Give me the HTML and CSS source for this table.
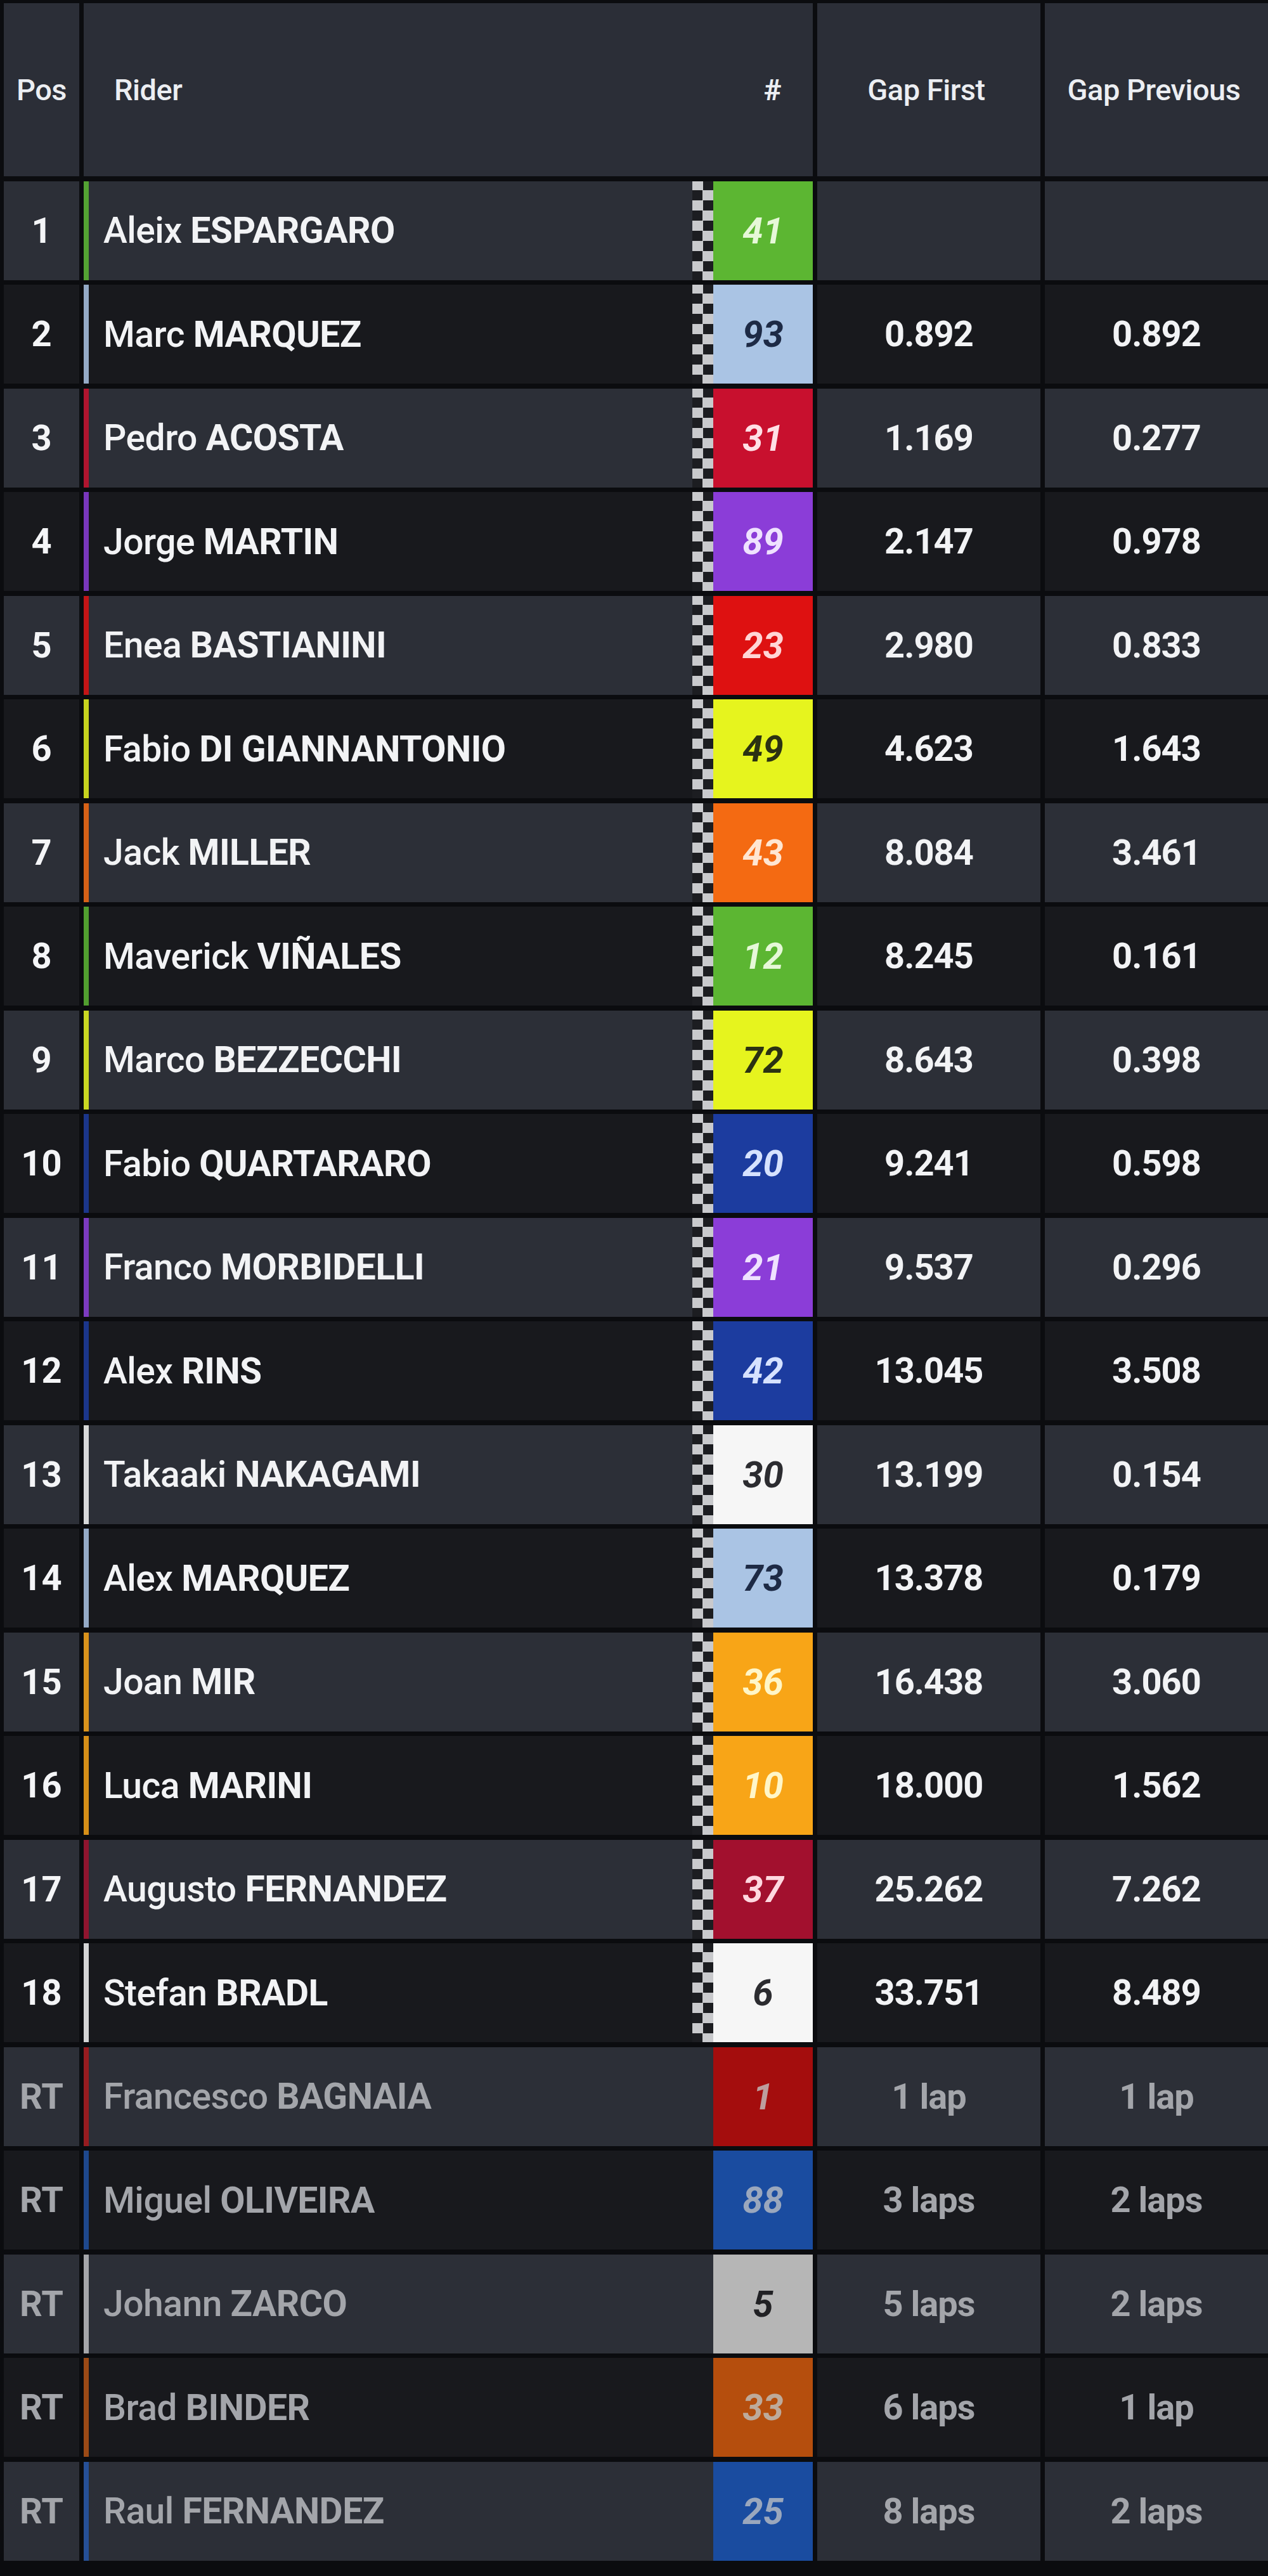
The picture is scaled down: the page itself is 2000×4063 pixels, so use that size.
FILE: index.html
```html
<!DOCTYPE html>
<html lang="en">
<head>
<meta charset="utf-8">
<title>Race Classification</title>
<link rel="stylesheet" href="styles.css">
</head>
<body>
<div class="board">
  <div class="head">
    <div class="cell h-pos">Pos</div>
    <div class="cell h-rider"><span class="h-label">Rider</span><span class="h-num">#</span></div>
    <div class="cell h-gap">Gap First</div>
    <div class="cell h-gap">Gap Previous</div>
  </div>

  <div class="row aprilia"><div class="cell pos">1</div><div class="cell rider"><span class="bar"></span><span class="name">Aleix <b>ESPARGARO</b></span><span class="flag"></span><span class="num">41</span></div><div class="cell gap"></div><div class="cell gap"></div></div>
  <div class="row gresini"><div class="cell pos">2</div><div class="cell rider"><span class="bar"></span><span class="name">Marc <b>MARQUEZ</b></span><span class="flag"></span><span class="num">93</span></div><div class="cell gap">0.892</div><div class="cell gap">0.892</div></div>
  <div class="row tech3"><div class="cell pos">3</div><div class="cell rider"><span class="bar"></span><span class="name">Pedro <b>ACOSTA</b></span><span class="flag"></span><span class="num">31</span></div><div class="cell gap">1.169</div><div class="cell gap">0.277</div></div>
  <div class="row pramac"><div class="cell pos">4</div><div class="cell rider"><span class="bar"></span><span class="name">Jorge <b>MARTIN</b></span><span class="flag"></span><span class="num">89</span></div><div class="cell gap">2.147</div><div class="cell gap">0.978</div></div>
  <div class="row ducati"><div class="cell pos">5</div><div class="cell rider"><span class="bar"></span><span class="name">Enea <b>BASTIANINI</b></span><span class="flag"></span><span class="num">23</span></div><div class="cell gap">2.980</div><div class="cell gap">0.833</div></div>
  <div class="row vr46"><div class="cell pos">6</div><div class="cell rider"><span class="bar"></span><span class="name">Fabio <b>DI GIANNANTONIO</b></span><span class="flag"></span><span class="num">49</span></div><div class="cell gap">4.623</div><div class="cell gap">1.643</div></div>
  <div class="row ktm"><div class="cell pos">7</div><div class="cell rider"><span class="bar"></span><span class="name">Jack <b>MILLER</b></span><span class="flag"></span><span class="num">43</span></div><div class="cell gap">8.084</div><div class="cell gap">3.461</div></div>
  <div class="row aprilia"><div class="cell pos">8</div><div class="cell rider"><span class="bar"></span><span class="name">Maverick <b>VIÑALES</b></span><span class="flag"></span><span class="num">12</span></div><div class="cell gap">8.245</div><div class="cell gap">0.161</div></div>
  <div class="row vr46"><div class="cell pos">9</div><div class="cell rider"><span class="bar"></span><span class="name">Marco <b>BEZZECCHI</b></span><span class="flag"></span><span class="num">72</span></div><div class="cell gap">8.643</div><div class="cell gap">0.398</div></div>
  <div class="row yamaha"><div class="cell pos">10</div><div class="cell rider"><span class="bar"></span><span class="name">Fabio <b>QUARTARARO</b></span><span class="flag"></span><span class="num">20</span></div><div class="cell gap">9.241</div><div class="cell gap">0.598</div></div>
  <div class="row pramac"><div class="cell pos">11</div><div class="cell rider"><span class="bar"></span><span class="name">Franco <b>MORBIDELLI</b></span><span class="flag"></span><span class="num">21</span></div><div class="cell gap">9.537</div><div class="cell gap">0.296</div></div>
  <div class="row yamaha"><div class="cell pos">12</div><div class="cell rider"><span class="bar"></span><span class="name">Alex <b>RINS</b></span><span class="flag"></span><span class="num">42</span></div><div class="cell gap">13.045</div><div class="cell gap">3.508</div></div>
  <div class="row lcr"><div class="cell pos">13</div><div class="cell rider"><span class="bar"></span><span class="name">Takaaki <b>NAKAGAMI</b></span><span class="flag"></span><span class="num">30</span></div><div class="cell gap">13.199</div><div class="cell gap">0.154</div></div>
  <div class="row gresini"><div class="cell pos">14</div><div class="cell rider"><span class="bar"></span><span class="name">Alex <b>MARQUEZ</b></span><span class="flag"></span><span class="num">73</span></div><div class="cell gap">13.378</div><div class="cell gap">0.179</div></div>
  <div class="row repsol"><div class="cell pos">15</div><div class="cell rider"><span class="bar"></span><span class="name">Joan <b>MIR</b></span><span class="flag"></span><span class="num">36</span></div><div class="cell gap">16.438</div><div class="cell gap">3.060</div></div>
  <div class="row repsol"><div class="cell pos">16</div><div class="cell rider"><span class="bar"></span><span class="name">Luca <b>MARINI</b></span><span class="flag"></span><span class="num">10</span></div><div class="cell gap">18.000</div><div class="cell gap">1.562</div></div>
  <div class="row tech3-dark"><div class="cell pos">17</div><div class="cell rider"><span class="bar"></span><span class="name">Augusto <b>FERNANDEZ</b></span><span class="flag"></span><span class="num">37</span></div><div class="cell gap">25.262</div><div class="cell gap">7.262</div></div>
  <div class="row lcr"><div class="cell pos">18</div><div class="cell rider"><span class="bar"></span><span class="name">Stefan <b>BRADL</b></span><span class="flag"></span><span class="num">6</span></div><div class="cell gap">33.751</div><div class="cell gap">8.489</div></div>

  <div class="row ducati retired"><div class="cell pos">RT</div><div class="cell rider"><span class="bar"></span><span class="name">Francesco <b>BAGNAIA</b></span><span class="num">1</span></div><div class="cell gap">1 lap</div><div class="cell gap">1 lap</div></div>
  <div class="row trackhouse retired"><div class="cell pos">RT</div><div class="cell rider"><span class="bar"></span><span class="name">Miguel <b>OLIVEIRA</b></span><span class="num">88</span></div><div class="cell gap">3 laps</div><div class="cell gap">2 laps</div></div>
  <div class="row lcr retired"><div class="cell pos">RT</div><div class="cell rider"><span class="bar"></span><span class="name">Johann <b>ZARCO</b></span><span class="num">5</span></div><div class="cell gap">5 laps</div><div class="cell gap">2 laps</div></div>
  <div class="row ktm retired"><div class="cell pos">RT</div><div class="cell rider"><span class="bar"></span><span class="name">Brad <b>BINDER</b></span><span class="num">33</span></div><div class="cell gap">6 laps</div><div class="cell gap">1 lap</div></div>
  <div class="row trackhouse retired"><div class="cell pos">RT</div><div class="cell rider"><span class="bar"></span><span class="name">Raul <b>FERNANDEZ</b></span><span class="num">25</span></div><div class="cell gap">8 laps</div><div class="cell gap">2 laps</div></div>
</div>
</body>
</html>
```

FILE: styles.css
```css
* { box-sizing: border-box; }

html, body {
  margin: 0;
  padding: 0;
  background: #0b0c0f;
}

body {
  width: 2000px;
  min-height: 4063px;
  font-family: Roboto, "Liberation Sans", Arial, sans-serif;
  color: #f2f3f5;
}

.board {
  display: flex;
  flex-direction: column;
  gap: 7.5px;
  padding: 5px 0 0 6px;
}

.head,
.row {
  display: grid;
  grid-template-columns: 119px 1150px 352px 352px;
  column-gap: 7px;
}

.head { height: 273px; }
.row { height: 156px; }

.cell {
  display: flex;
  align-items: center;
  background: #2c2f37;
}

.row:nth-child(odd) .cell { background: #18191d; }

/* header */
.head .cell {
  font-size: 47px;
  font-weight: 500;
  color: #eceef2;
  background: #2b2e37;
  letter-spacing: -0.5px;
}

.h-pos { justify-content: center; }

.h-rider { padding-left: 48px; }
.h-label { flex: 1; }
.h-num {
  width: 157px;
  padding-left: 30px;
  text-align: center;
  font-weight: 700;
}

.h-gap {
  justify-content: center;
  padding-right: 8px;
}

/* rows */
.pos {
  justify-content: center;
  font-size: 56px;
  font-weight: 700;
  color: #f4f5f7;
}

.rider {
  align-items: stretch;
}

.bar {
  width: 8px;
  flex: none;
  background: var(--team);
  opacity: 0.85;
}

.name {
  flex: 1;
  display: flex;
  align-items: center;
  padding-left: 23px;
  font-size: 57px;
  font-weight: 500;
  white-space: pre;
  letter-spacing: -0.5px;
}

.name b {
  font-weight: 700;
}

.flag {
  width: 33px;
  flex: none;
  background: repeating-conic-gradient(#c9cacd 0 25%, #1c1d21 0 50%) 0 14px / 33px 32px;
}

.num {
  width: 157px;
  flex: none;
  display: flex;
  align-items: center;
  justify-content: center;
  background: var(--team);
  color: var(--num);
  font-size: 58px;
  font-weight: 700;
  font-style: italic;
}

.gap {
  justify-content: center;
  font-size: 56px;
  font-weight: 700;
  letter-spacing: -1px;
  color: #f2f3f5;
}

/* retired rows */
.retired .pos,
.retired .name,
.retired .gap {
  color: #a3a5aa;
}

.retired .num {
  margin-left: 33px;
  filter: brightness(0.74);
}

.retired .bar { opacity: 0.6; }

/* teams */
.aprilia    { --team: #5cb632; --num: #e6f8d8; }
.gresini    { --team: #aac4e4; --num: #1d2a45; }
.tech3      { --team: #c8102e; --num: #ffe0e6; }
.tech3-dark { --team: #a2102e; --num: #ffd8e0; }
.pramac     { --team: #8b3dd8; --num: #efe2ff; }
.ducati     { --team: #de1111; --num: #ffd6d6; }
.vr46       { --team: #e6f41e; --num: #2b3212; }
.ktm        { --team: #f46a12; --num: #ffe6d2; }
.yamaha     { --team: #1c3c9f; --num: #d6e2ff; }
.lcr        { --team: #f6f6f6; --num: #2c2c30; }
.repsol     { --team: #f8a517; --num: #fff6c8; }
.trackhouse { --team: #2367d8; --num: #d0e2ff; }
```
